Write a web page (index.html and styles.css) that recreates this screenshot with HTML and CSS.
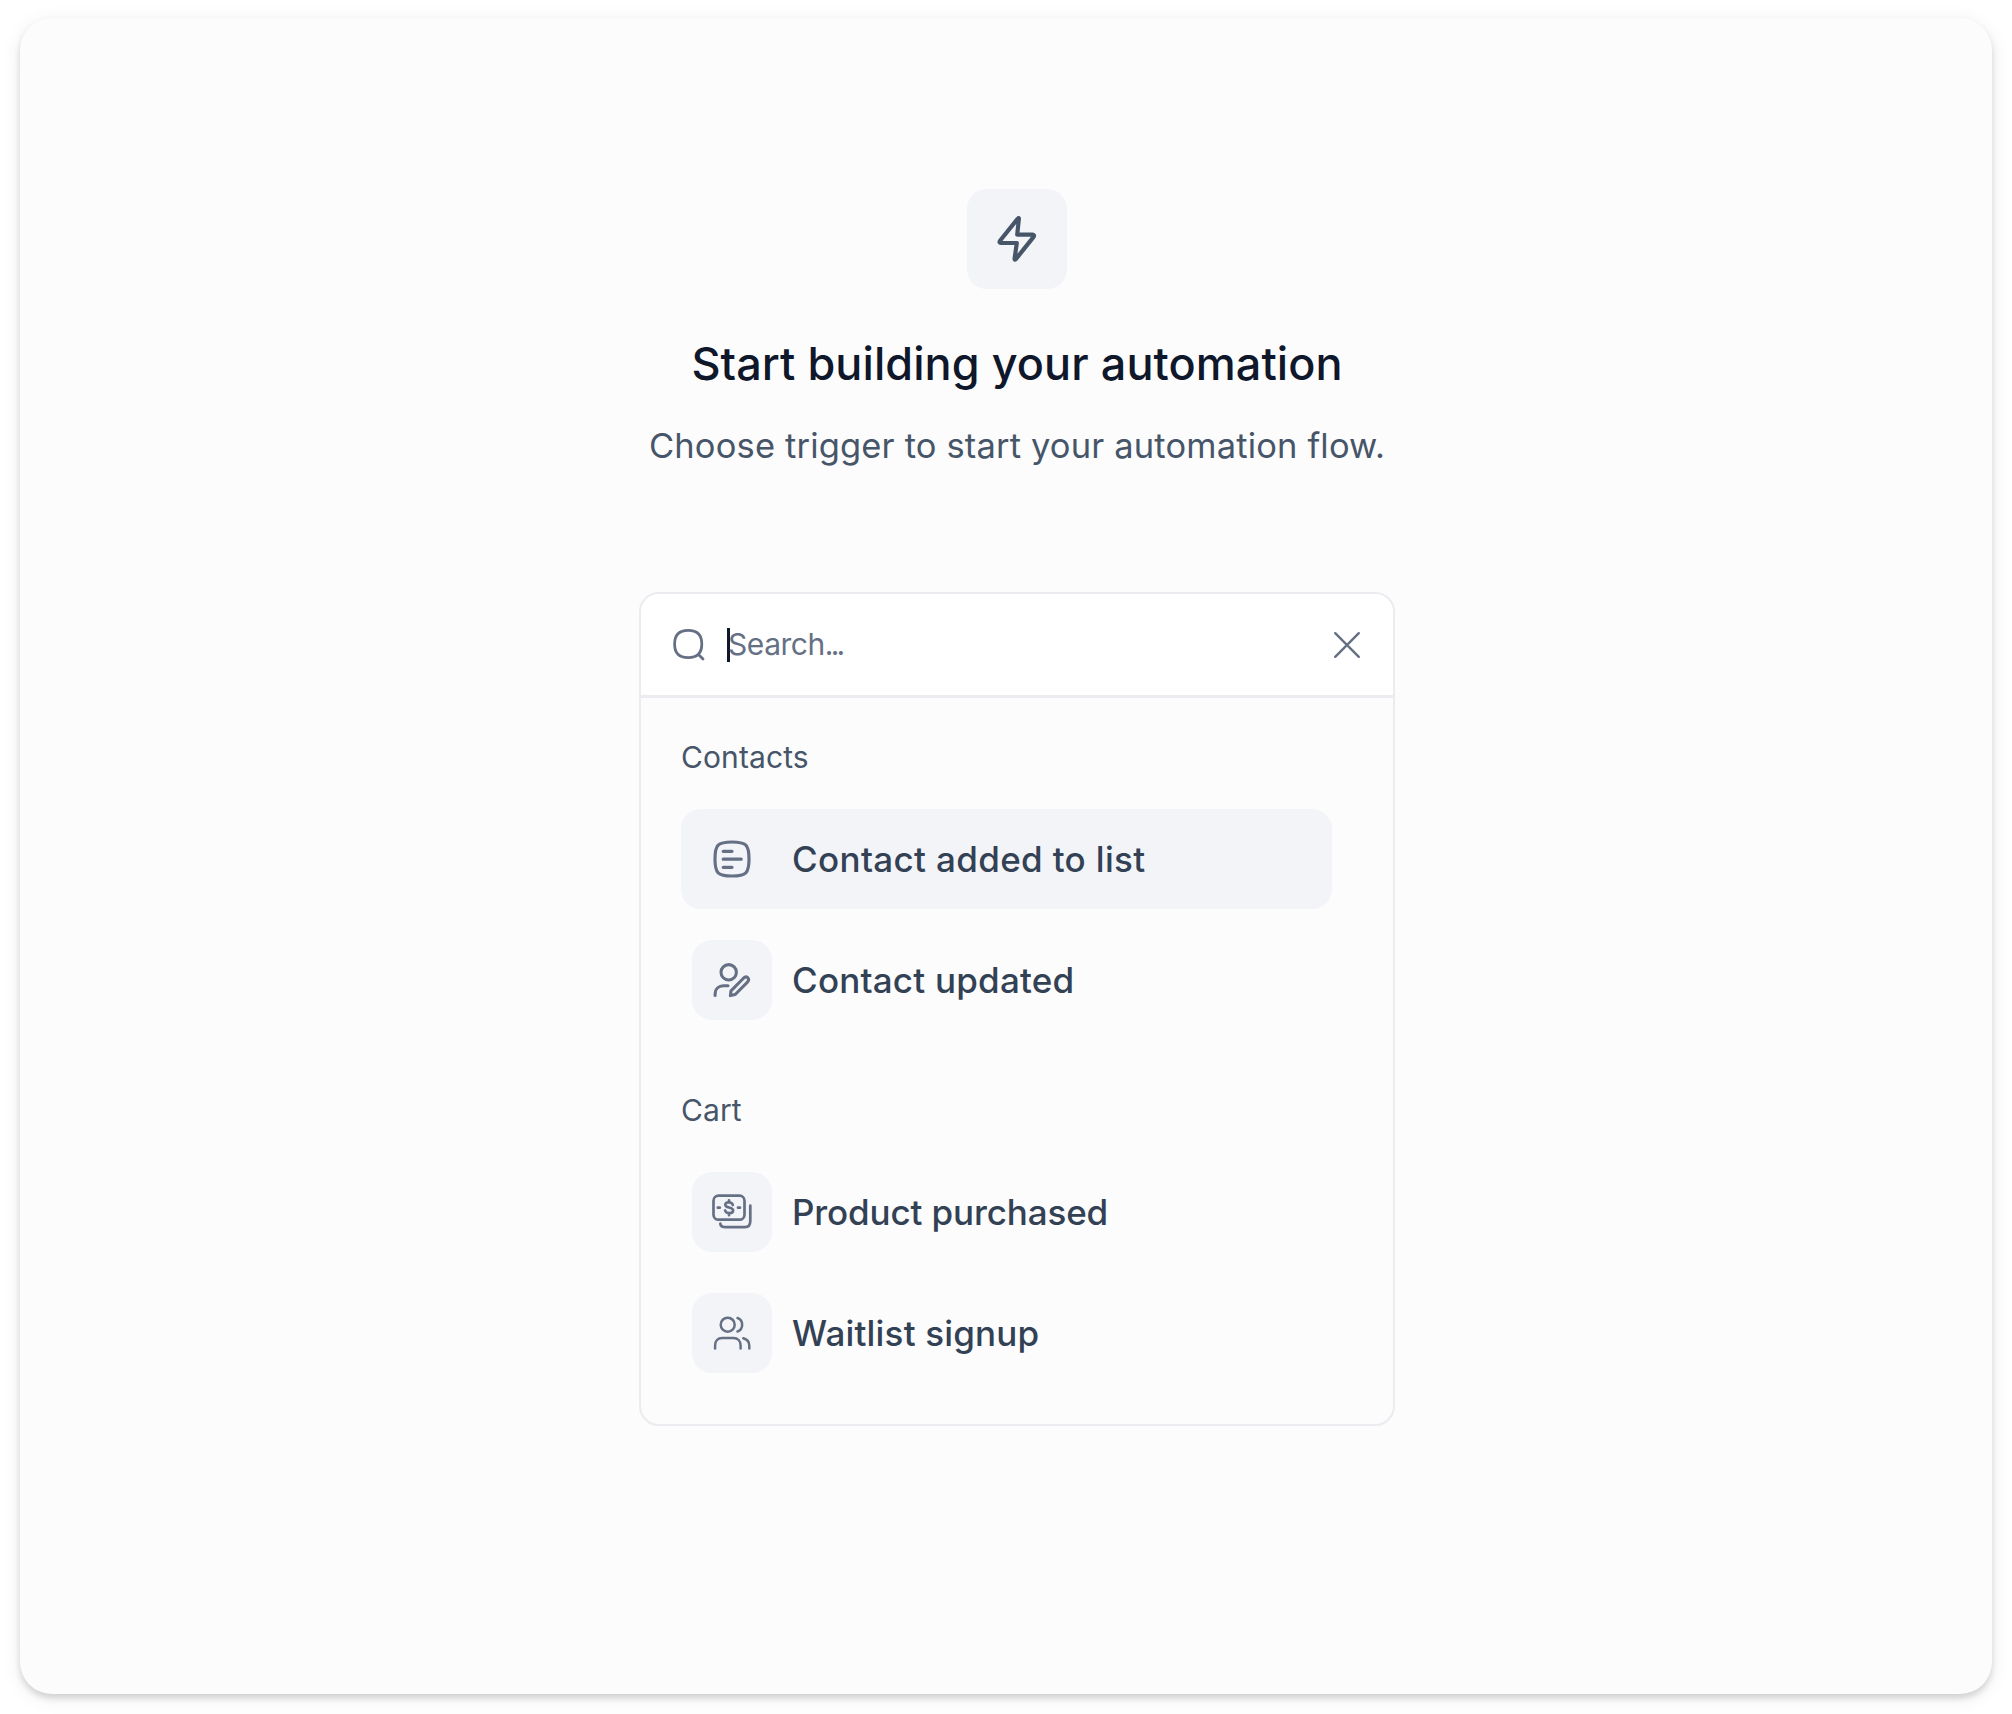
FILE: index.html
```html
<!DOCTYPE html>
<html lang="en">
<head>
    <meta charset="UTF-8">
    <meta name="viewport" content="width=device-width, initial-scale=1.0">
    <title>Automation</title>
    <link rel="stylesheet" href="styles.css">
</head>
<body>
    <main class="canvas">
        <div class="hero-icon">
            <svg width="48" height="48" viewBox="0 0 48 48" stroke-width="4.2">
                <path d="M25.9 3.6 24.2 19.7H39.6q2.2.3 1 2.2L22.8 44.2q-1.4 1.2-1.2-.6L23.8 28H8q-2.2-.3-1-2.2L24.6 3.8q1.4-1.2 1.3-.2Z"/>
            </svg>
        </div>
        <h1 class="title">Start building your automation</h1>
        <p class="subtitle">Choose trigger to start your automation flow.</p>

        <div class="picker">
            <div class="search">
                <svg width="40" height="40" viewBox="0 0 40 40" stroke-width="2.8">
                    <path d="M19.2 5.4C28.4 5.4 32.8 9.8 32.8 19S28.4 32.6 19.2 32.6 5.6 28.2 5.6 19 10 5.4 19.2 5.4ZM29.2 29.2l4.8 4.8"/>
                </svg>
                <span class="cursor"></span>
                <span class="placeholder">Search<span class="dots">...</span></span>
                <svg class="close" width="32" height="32" viewBox="0 0 32 32" stroke-width="2.4">
                    <path d="M4.2 4.2l23.6 23.6M27.8 4.2L4.2 27.8"/>
                </svg>
            </div>

            <div class="group">
                <h2 class="group-name">Contacts</h2>
                <div class="item active">
                    <span class="item-icon">
                        <svg width="40" height="40" viewBox="0 0 40 40" stroke-width="3.2">
                            <path d="M20 3C34.2 3 37 5.8 37 20S34.2 37 20 37 3 34.2 3 20 5.8 3 20 3ZM11.2 12.3h8.8M11.2 20.2h18M11.2 28.3h8.8"/>
                        </svg>
                    </span>
                    <span class="item-name added">Contact added to list</span>
                </div>
                <div class="item">
                    <span class="item-icon">
                        <svg width="40" height="40" viewBox="0 0 40 40" stroke-width="3.1">
                            <circle cx="16.7" cy="12.3" r="7.7"/>
                            <path d="M3.1 35.5V34c0-5 3.4-8.2 8.4-8.2h4.5M18.4 35.6l.6-4.8L31.7 18c2.8-2.6 6.5.6 4 3.8L23.2 34.5Z"/>
                        </svg>
                    </span>
                    <span class="item-name updated">Contact updated</span>
                </div>
            </div>

            <div class="group">
                <h2 class="group-name">Cart</h2>
                <div class="item">
                    <span class="item-icon">
                        <svg width="40" height="40" viewBox="0 0 40 40" stroke-width="2.7">
                            <rect x="1.5" y="3.7" width="31" height="24" rx="5"/>
                            <path d="M38.3 13.5V29q0 6.2-5.5 6.2H14q-5.5 0-5.7-3.6M5.8 15.7h2M26 15.7h2M17 8.3v2M17 21.2v2M20.8 13c-1-3.6-7.5-3.6-7.5-.2 0 3.8 7.8 1.7 7.8 5.7 0 3.6-7 3.6-8 0"/>
                        </svg>
                    </span>
                    <span class="item-name product">Product purchased</span>
                </div>
                <div class="item">
                    <span class="item-icon">
                        <svg width="40" height="40" viewBox="0 0 40 40" stroke-width="2.5">
                            <circle cx="15.7" cy="11.7" r="7"/>
                            <path d="M25.5 5c6.2 2.2 6.2 11.2 0 13.5M3.1 35.5v-3c0-4.5 2.7-7.4 7-7.4h11.2c4.5 0 7.3 2.9 7.3 7.4v3M31.3 25.2c3.7 1 6 3.7 6 7.3v3"/>
                        </svg>
                    </span>
                    <span class="item-name waitlist">Waitlist signup</span>
                </div>
            </div>
        </div>
    </main>
</body>
</html>
```
FILE: styles.css
```css
* {
    box-sizing: border-box;
}
body {
    margin: 0;
    padding: 18px 20px 20px;
    background: #fff;
    font-family: Inter, "Liberation Sans", sans-serif;
}
h1, h2, p {
    margin: 0;
    white-space: nowrap;
}
svg {
    display: block;
    flex: none;
    fill: none;
    stroke: #667085;
    stroke-linecap: round;
    stroke-linejoin: round;
}
.canvas {
    display: flex;
    flex-direction: column;
    align-items: center;
    height: 1676px;
    padding: 171px 0 0 22px;
    background: #fcfcfc;
    border-radius: 32px;
    box-shadow: 0 4px 6px rgba(0,0,0,0.14), 0 4px 20px rgba(0,0,0,0.08);
}
.hero-icon {
    display: flex;
    align-items: center;
    justify-content: center;
    width: 100px;
    height: 100px;
    background: #f3f4f8;
    border-radius: 20px;
}
.hero-icon svg {
    stroke: #475569;
}
.title {
    margin-top: 45px;
    font-size: 45px;
    line-height: 60px;
    font-weight: 500;
    letter-spacing: 0.07px;
    color: #0f172a;
}
.subtitle {
    margin-top: 27px;
    font-size: 34.5px;
    line-height: 50px;
    letter-spacing: 0.16px;
    color: #475569;
}
.picker {
    width: 756px;
    height: 834px;
    margin-top: 121px;
    border: 2px solid #ebebf0;
    border-radius: 20px;
    overflow: hidden;
}
.search {
    display: flex;
    align-items: center;
    height: 104px;
    padding: 0 30px 0 28px;
    background: #fff;
    border-bottom: 3px solid #ebebf0;
}
.cursor {
    width: 3px;
    height: 34px;
    margin-left: 18px;
    background: #0f172a;
}
.placeholder {
    margin: -1px 0 0 -2px;
    font-size: 30px;
    letter-spacing: -0.45px;
    color: #667085;
}
.dots {
    letter-spacing: -2.8px;
}
.close {
    margin-left: auto;
}
.group {
    width: 691px;
    padding: 39px 0 0 40px;
}
.group-name {
    margin-bottom: 32px;
    font-size: 30px;
    line-height: 40px;
    font-weight: 400;
    letter-spacing: 0.1px;
    color: #475569;
}
.item {
    display: flex;
    align-items: center;
    gap: 20px;
    height: 100px;
    margin-bottom: 21px;
    padding: 0 11px;
    border-radius: 20px;
}
.item-icon {
    display: flex;
    align-items: center;
    justify-content: center;
    width: 80px;
    height: 80px;
    background: #f3f4f8;
    border-radius: 20px;
}
.active {
    background: #f3f4f8;
}
.item-name {
    font-size: 35px;
    font-weight: 500;
    color: #334155;
    white-space: nowrap;
}
.added {
    letter-spacing: 0.34px;
}
.updated {
    letter-spacing: 0.21px;
}
.product {
    letter-spacing: -0.13px;
}
.waitlist {
    letter-spacing: 0.18px;
}
```
